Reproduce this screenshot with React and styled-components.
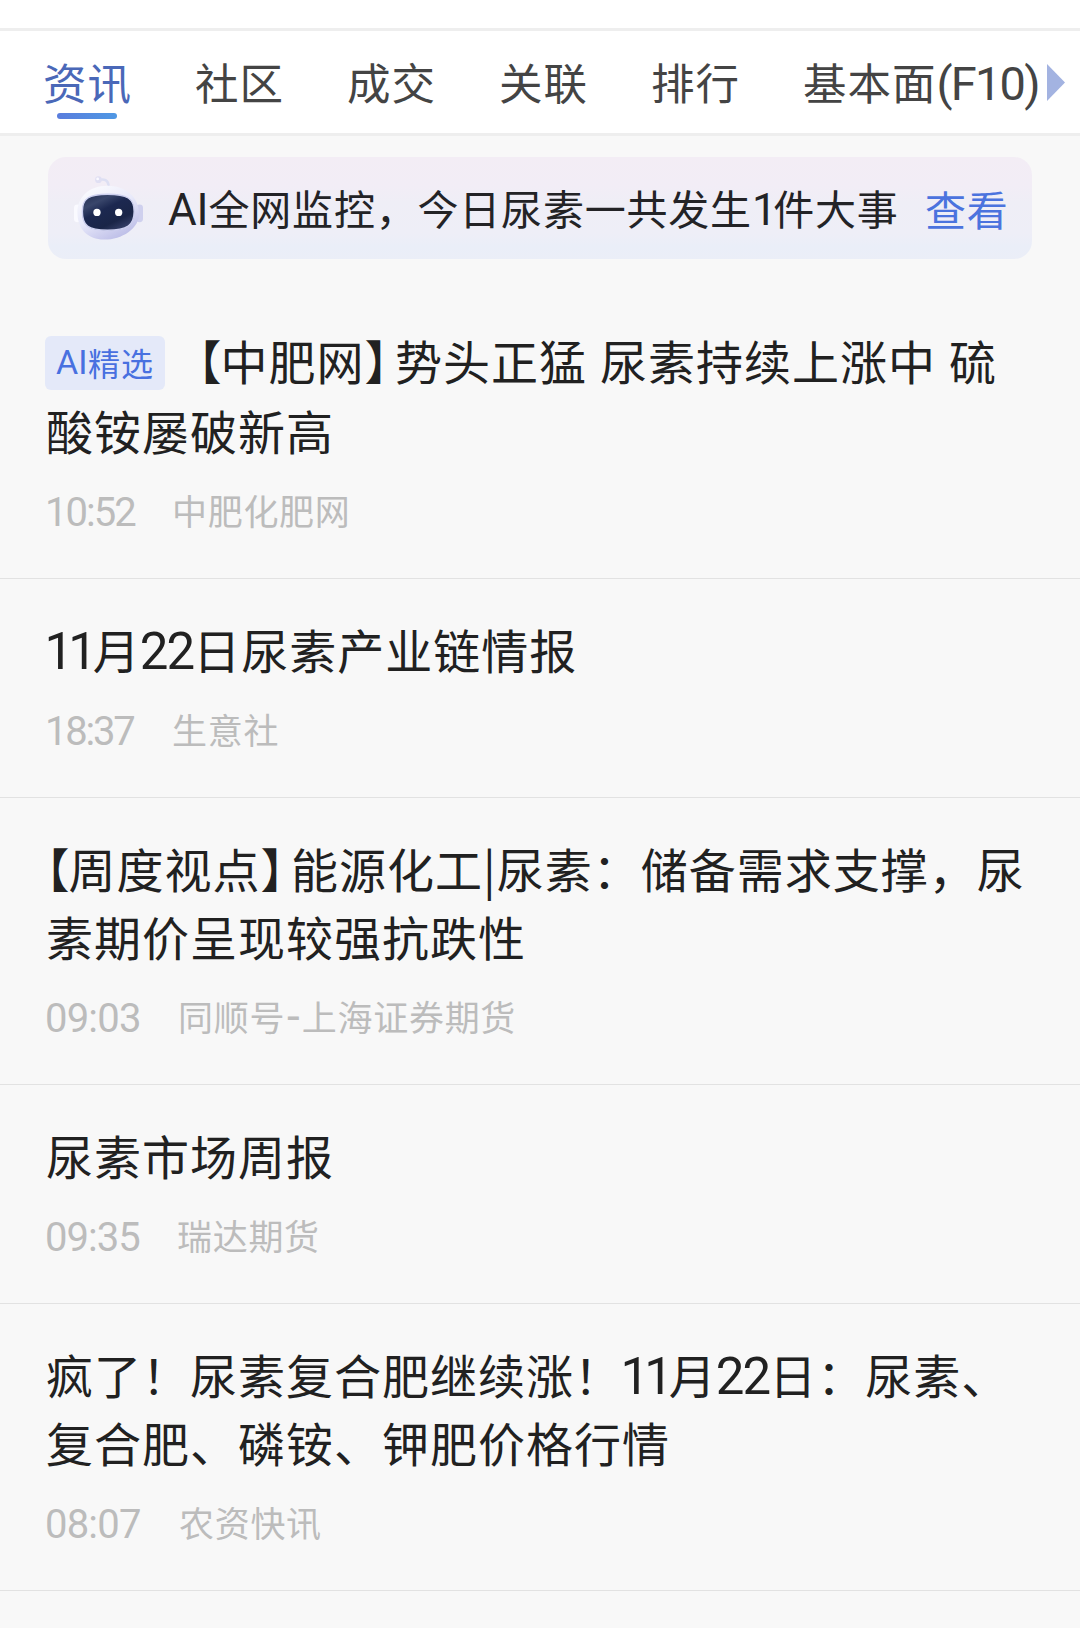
import React from "react";
import styled, { createGlobalStyle } from "styled-components";

const GlobalStyle = createGlobalStyle`
  * { box-sizing: border-box; }
  body {
    margin: 0;
    background: #f8f8f8;
    font-family: "Noto Sans CJK SC", sans-serif;
    text-spacing-trim: space-all;
    text-autospace: no-autospace;
  }
`;

const Page = styled.main`
  width: 1080px;
  height: 1628px;
  overflow: hidden;
  background: #f8f8f8;
`;

const TopStrip = styled.div`
  height: 31px;
  background: #fff;
  border-bottom: 3px solid #eeeeee;
`;

const TabBar = styled.nav`
  display: flex;
  align-items: flex-start;
  gap: 63px;
  height: 105px;
  padding-left: 43px;
  background: #fff;
  border-bottom: 3px solid #eeeeee;
`;

const Tab = styled.div`
  display: flex;
  flex-direction: column;
  align-items: center;
  flex: none;
  height: 88px;
  padding-top: 18px;
  font-size: 43.5px;
  line-height: 65px;
  letter-spacing: 1px;
  white-space: nowrap;
  color: ${(p) => (p.$active ? "#4a68b8" : "#444444")};
`;

const TabLabel = styled.span`
  display: block;
  height: 64px;
`;

const Underline = styled.span`
  width: 60px;
  height: 6px;
  margin-right: 1px;
  border-radius: 3px;
  background: linear-gradient(90deg, #5a7ddd, #4f98e4);
`;

const MoreArrow = styled.svg`
  flex: none;
  width: 18px;
  height: 37px;
  margin: 33px 0 0 -55px;
`;

const Latin = styled.span`
  font-family: Roboto, "Liberation Sans", sans-serif;
  font-size: ${(p) => p.$size}px;
  line-height: 1;
  letter-spacing: ${(p) => p.$track || 0}px;
  margin-top: ${(p) => p.$drop || 0}px;
  margin-left: ${(p) => p.$before || 0}px;
  margin-right: ${(p) => p.$after || 0}px;
`;

const Banner = styled.section`
  display: flex;
  align-items: center;
  width: 984px;
  height: 102px;
  margin: 21px 0 30px 48px;
  padding-left: 23px;
  border-radius: 18px;
  background: linear-gradient(180deg, #f3edf5 0%, #f2edf6 28%, #efeef6 45%, #eeeef7 75%, #eaeef8 88%, #ebeef7 100%);
  font-size: 41px;
  line-height: 60px;
  letter-spacing: 0.8px;
  white-space: nowrap;
`;

const Robot = styled.svg`
  flex: none;
  width: 75px;
  height: 71px;
  margin-top: 3px;
`;

const BannerText = styled.span`
  width: 779px;
  padding: 0 0 3px 22px;
  color: #232326;
`;

const BannerLink = styled.a`
  color: #4b73de;
`;

const Item = styled.article`
  padding: 36px 0 43px 46px;
  border-bottom: 1px solid #e2e2e2;
`;

const Title = styled.h2`
  margin: 0;
  font-size: 47px;
  font-weight: 400;
  letter-spacing: 1px;
  color: #212121;
`;

const Line = styled.div`
  display: flex;
  align-items: center;
  height: ${(p) => (p.$tall ? 71 : 68)}px;
  padding-bottom: ${(p) => (p.$tall ? 1 : 0)}px;
  line-height: 68px;
  white-space: pre;
`;

const Tag = styled.span`
  display: flex;
  align-items: center;
  justify-content: center;
  width: 120px;
  height: 54px;
  margin: 6px 33px 0 -1px;
  padding-bottom: 2px;
  border-radius: 6px;
  background: #e4e9f9;
  color: #4870e0;
  font-size: 32px;
  line-height: 54px;
`;

const Bracket = styled.span`
  font-feature-settings: "halt";
  margin-right: ${(p) => (p.$close ? 6 : -2)}px;
`;

const Gap = styled.span`
  display: inline-block;
  width: 13px;
`;

const Meta = styled.div`
  display: flex;
  align-items: center;
  height: 50px;
  margin-top: 21px;
  color: #bcbcbc;
  font-size: 35px;
  line-height: 50px;
  letter-spacing: 0.7px;
`;

const Time = styled.span`
  flex: none;
  width: ${(p) => p.$width}px;
  padding-top: 2px;
  line-height: 50px;
`;

const Source = styled.span`
  display: flex;
  align-items: center;
`;

function RobotIcon() {
  return (
    <Robot viewBox="10 8 76 72">
      <defs>
        <linearGradient id="head" x1="0" y1="0" x2="0.6" y2="1">
          <stop offset="0" stopColor="#ffffff" />
          <stop offset="0.55" stopColor="#e8e9fa" />
          <stop offset="1" stopColor="#bfc0e8" />
        </linearGradient>
        <linearGradient id="visor" x1="0" y1="0" x2="0.7" y2="1">
          <stop offset="0" stopColor="#222d50" />
          <stop offset="0.28" stopColor="#39466b" />
          <stop offset="0.48" stopColor="#1c2850" />
          <stop offset="0.8" stopColor="#1a2547" />
          <stop offset="1" stopColor="#343e66" />
        </linearGradient>
      </defs>
      <path d="M38 14 Q47 12 48 19" fill="none" stroke="#dddff3" strokeWidth="2.6" strokeLinecap="round" />
      <circle cx="37.8" cy="13.8" r="3.4" fill="#e0dff3" />
      <circle cx="37" cy="13" r="1.4" fill="#faf9ff" />
      <rect x="13" y="39" width="7" height="18" rx="3.5" fill="#fafaff" />
      <rect x="76" y="39" width="7" height="18" rx="3.5" fill="#cfd0ee" />
      <path d="M47 20 C65 20 78 31 79 47 C80 64 60 75 43 74.500 C28 74 17 65 16.500 48 C16 31 29 20 47 20Z" fill="url(#head)" />
      <path d="M47 28.500 C67 28.500 74 33 74 46 C74 60 67 65 47 65 C27 65 21.500 60 21.500 46 C21.500 33 28 28.500 47 28.500Z" fill="url(#visor)" stroke="#cdd0ef" strokeWidth="1.4" />
      <circle cx="36.3" cy="47" r="3.7" fill="#fff" />
      <circle cx="58.3" cy="47" r="3.7" fill="#fff" />
    </Robot>
  );
}

const TABS = ["资讯", "社区", "成交", "关联", "排行"];

const Eleven = () => <Latin $size={51} $track={-5} $before={-1.5} $after={1} $drop={5}>11</Latin>;
const TwentyTwo = () => <Latin $size={51} $track={-2} $before={-1} $drop={5}>22</Latin>;

const NEWS = [
  {
    lines: [
      <>
        <Tag><Latin $size={34} $after={0.5}>AI</Latin>精选</Tag>
        <Bracket>【</Bracket>中肥网<Bracket $close>】</Bracket>势头正猛<Gap />尿素持续上涨中<Gap />硫
      </>,
      "酸铵屡破新高",
    ],
    time: "10:52",
    timeWidth: 126,
    timeTrack: -2,
    source: "中肥化肥网",
  },
  {
    lines: [<><Eleven />月<TwentyTwo />日尿素产业链情报</>],
    time: "18:37",
    timeWidth: 126,
    timeTrack: -2.2,
    source: "生意社",
  },
  {
    lines: [
      <>
        <Bracket>【</Bracket>周度视点<Bracket $close>】</Bracket>能源化工|尿素：储备需求支撑，尿
      </>,
      "素期价呈现较强抗跌性",
    ],
    time: "09:03",
    timeWidth: 132,
    timeTrack: -0.8,
    source: <>同顺号<Latin $size={46} $before={2} $after={2}>-</Latin>上海证券期货</>,
  },
  {
    lines: ["尿素市场周报"],
    time: "09:35",
    timeWidth: 131,
    timeTrack: -1,
    source: "瑞达期货",
  },
  {
    lines: [
      <>疯了！尿素复合肥继续涨！<Eleven />月<TwentyTwo />日：尿素、</>,
      "复合肥、磷铵、钾肥价格行情",
    ],
    time: "08:07",
    timeWidth: 133,
    timeTrack: -0.8,
    source: "农资快讯",
  },
];

export default function App() {
  return (
    <Page>
      <GlobalStyle />
      <TopStrip />
      <TabBar>
        {TABS.map((name, i) => (
          <Tab key={name} $active={i === 0}>
            <TabLabel>{name}</TabLabel>
            {i === 0 && <Underline />}
          </Tab>
        ))}
        <Tab>
          <TabLabel>基本面<Latin $size={47} $track={-1.8}>(F10)</Latin></TabLabel>
        </Tab>
        <MoreArrow viewBox="0 0 18 37">
          <path d="M0 0L18 18.500L0 37Z" fill="#a3b3e1" />
        </MoreArrow>
      </TabBar>
      <Banner>
        <RobotIcon />
        <BannerText>
          <Latin $size={44} $track={-0.1}>AI</Latin>全网监控，今日尿素一共发生<Latin $size={44} $track={-3.5}>1</Latin>件大事
        </BannerText>
        <BannerLink>查看</BannerLink>
      </Banner>
      {NEWS.map((item) => (
        <Item key={item.time}>
          <Title>
            {item.lines.map((line, i) => (
              <Line key={i} $tall={item.time === "10:52" && i === 0}>{line}</Line>
            ))}
          </Title>
          <Meta>
            <Time $width={item.timeWidth}>
              <Latin $size={40} $track={item.timeTrack} $before={-1}>{item.time}</Latin>
            </Time>
            <Source>{item.source}</Source>
          </Meta>
        </Item>
      ))}
    </Page>
  );
}
